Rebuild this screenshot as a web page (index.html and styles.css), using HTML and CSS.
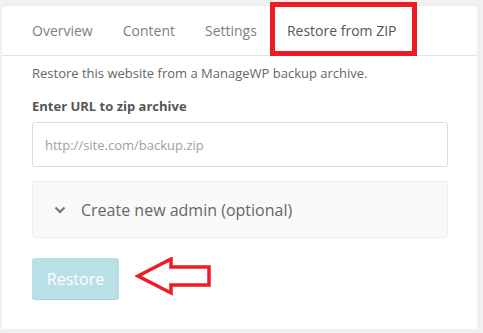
FILE: index.html
```html
<!DOCTYPE html>
<html lang="en">
<head>
  <meta charset="UTF-8" />
  <title>Restore from ZIP</title>
  <link rel="stylesheet" href="styles.css">
</head>
<body>
  <div class="panel">
    <nav class="tabs">
      <a class="tab">Overview</a>
      <a class="tab">Content</a>
      <a class="tab">Settings</a>
      <a class="tab active">Restore from ZIP</a>
      <span class="highlight"></span>
    </nav>

    <div class="body">
      <p class="intro">Restore this website from a ManageWP backup archive.</p>
      <label class="label" for="zip-url">Enter URL to zip archive</label>
      <input id="zip-url" class="input" type="text" placeholder="http://site.com/backup.zip">

      <div class="collapse">
        <svg class="chevron" width="12" height="8" viewBox="0 0 12 8">
          <path d="M1.5 1.5 L6 6 L10.5 1.5" fill="none" stroke="#777" stroke-width="2.2"/>
        </svg>
        <span>Create new admin (optional)</span>
      </div>

      <div class="actions">
        <button class="btn-restore" disabled>Restore</button>
        <svg class="arrow" width="80" height="40" viewBox="0 0 80 40">
          <path d="M3 19 L36 2 L36 10 L74 10 L74 28 L36 28 L36 36 Z" fill="#fff" stroke="#ed1c24" stroke-width="3.5" stroke-linejoin="miter"/>
        </svg>
      </div>
    </div>
  </div>
</body>
</html>
```

FILE: styles.css
```css
body {
    margin: 0;
    background: #f1f1f1;
    font-family: 'Open Sans', sans-serif;
    color: #666;
}
.panel {
    margin: 5px 6px 0 2px;
    height: 324px;
    background: #ffffff;
    border-top: 1px solid #e9e9e9;
    box-sizing: border-box;
}
.tabs {
    position: relative;
    display: flex;
    height: 49px;
    padding-left: 15px;
    border-bottom: 1px solid #e3e3e3;
    align-items: center;
}
.tab {
    padding: 0 15px;
    font-size: 14px;
    color: #808080;
    cursor: pointer;
}
.tab.active {
    color: #555;
}
.highlight {
    position: absolute;
    left: 268px;
    top: -4px;
    width: 137px;
    height: 44px;
    border: 5px solid #ed1c24;
}
.body {
    padding: 0 29px 0 30px;
}
.intro {
    margin: 7px 0 0;
    font-size: 13px;
    line-height: 20px;
}
.label {
    display: block;
    margin-top: 14px;
    font-size: 13px;
    font-weight: 700;
    color: #555;
    line-height: 18px;
}
.input {
    display: block;
    width: 100%;
    height: 45px;
    margin-top: 7px;
    padding: 0 12px;
    box-sizing: border-box;
    border: 1px solid #dcdcdc;
    border-radius: 3px;
    font-family: 'Open Sans', sans-serif;
    font-size: 13px;
}
.input::placeholder {
    color: #a0a0a0;
}
.collapse {
    display: flex;
    align-items: center;
    gap: 15px;
    height: 57px;
    margin-top: 14px;
    padding-left: 21px;
    box-sizing: border-box;
    background: #f9f9f9;
    border: 1px solid #ededed;
    border-radius: 4px;
    font-size: 16px;
    color: #666;
}
.actions {
    display: flex;
    align-items: center;
    gap: 16px;
    margin-top: 20px;
}
.btn-restore {
    width: 87px;
    height: 41px;
    border: none;
    border-radius: 3px;
    background: #b9dfe7;
    box-shadow: 0 1px 0 #a9d0d8;
    color: #fff;
    font-family: 'Open Sans', sans-serif;
    font-size: 16px;
}
.arrow {
    margin-top: -4px;
}
```
